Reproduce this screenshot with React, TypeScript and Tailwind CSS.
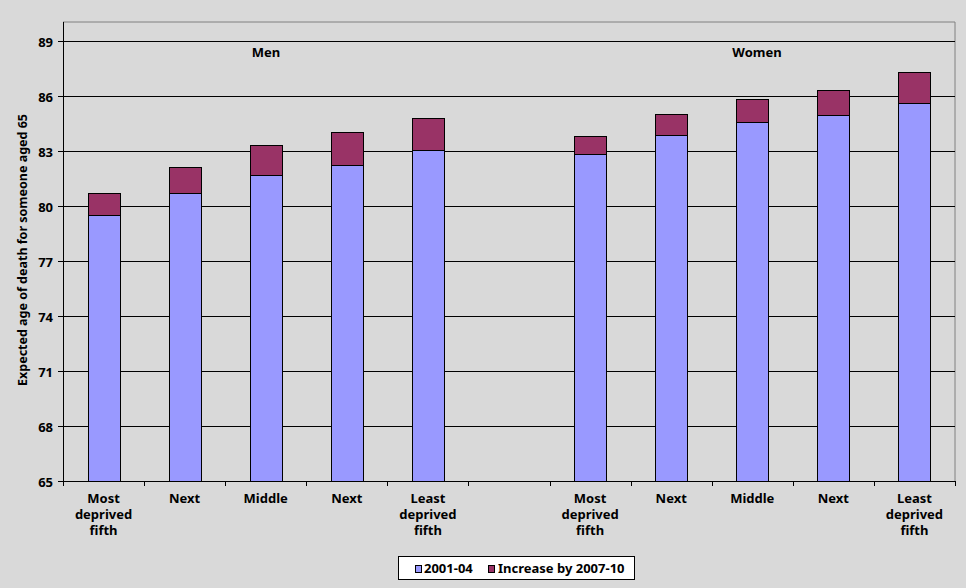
export default function App() {
  const base = [215, 193, 175, 165, 150, -1, 154, 135, 122, 115, 103];
  const top = [193, 167, 145, 132, 118, -1, 136, 114, 99, 90, 72];
  const labels = [["Most","deprived","fifth"],["Next"],["Middle"],["Next"],["Least","deprived","fifth"],[],["Most","deprived","fifth"],["Next"],["Middle"],["Next"],["Least","deprived","fifth"]];
  const L = 63, R = 955, B = 481, T = 22;
  const w = (R - L) / 11;
  const ticks = [65, 68, 71, 74, 77, 80, 83, 86, 89];
  return (
    <div className="w-[966px] h-[588px] bg-[#d9d9d9] overflow-hidden flex">
      <svg width="966" height="588" className="font-['Liberation_Sans',Arial,sans-serif] font-bold text-[13px]">
        <line x1={L} y1={T} x2={R} y2={T} stroke="#808080" />
        <line x1={R} y1={T} x2={R} y2={B} stroke="#808080" />
        {ticks.map((t, i) => {
          const y = B - i * 55 + 0.5;
          return (
            <g key={t}>
              <line x1={L - 5} y1={y} x2={R} y2={y} stroke="#000" />
              <text x={L - 10} y={y + 5} textAnchor="end" fill="#000">{t}</text>
            </g>
          );
        })}
        <line x1={L + 0.5} y1={T} x2={L + 0.5} y2={B} stroke="#000" />
        {Array.from({ length: 12 }).map((_, i) => (
          <line key={i} x1={Math.round(L + i * w) + 0.5} y1={B} x2={Math.round(L + i * w) + 0.5} y2={B + 5} stroke="#000" />
        ))}
        {base.map((b, i) => {
          if (b < 0) return null;
          const x = Math.round(L + i * w + w / 2 - 16) + 0.5;
          return (
            <g key={i}>
              <rect x={x} y={b + 0.5} width={32} height={B - b} fill="#9999ff" stroke="#000" />
              <rect x={x} y={top[i] + 0.5} width={32} height={b - top[i]} fill="#993366" stroke="#000" />
            </g>
          );
        })}
        {labels.map((ls, i) =>
          ls.map((s, j) => (
            <text key={i + "-" + j} x={L + i * w + w / 2} y={503 + j * 16} textAnchor="middle" fill="#000">{s}</text>
          ))
        )}
        <text x={266} y={57} textAnchor="middle" fill="#000">Men</text>
        <text x={757} y={57} textAnchor="middle" fill="#000">Women</text>
        <text transform="translate(27,250) rotate(-90)" textAnchor="middle" fill="#000" className="text-[12.5px]">Expected age of death for someone aged 65</text>
        <rect x={398.5} y={556.5} width={236} height={23} fill="#fff" stroke="#000" />
        <rect x={415.5} y={565.5} width={6} height={7} fill="#9999ff" stroke="#000" />
        <text x={424} y={573} fill="#000">2001-04</text>
        <rect x={488.5} y={565.5} width={6} height={7} fill="#993366" stroke="#000" />
        <text x={498} y={573} fill="#000">Increase by 2007-10</text>
      </svg>
    </div>
  );
}
